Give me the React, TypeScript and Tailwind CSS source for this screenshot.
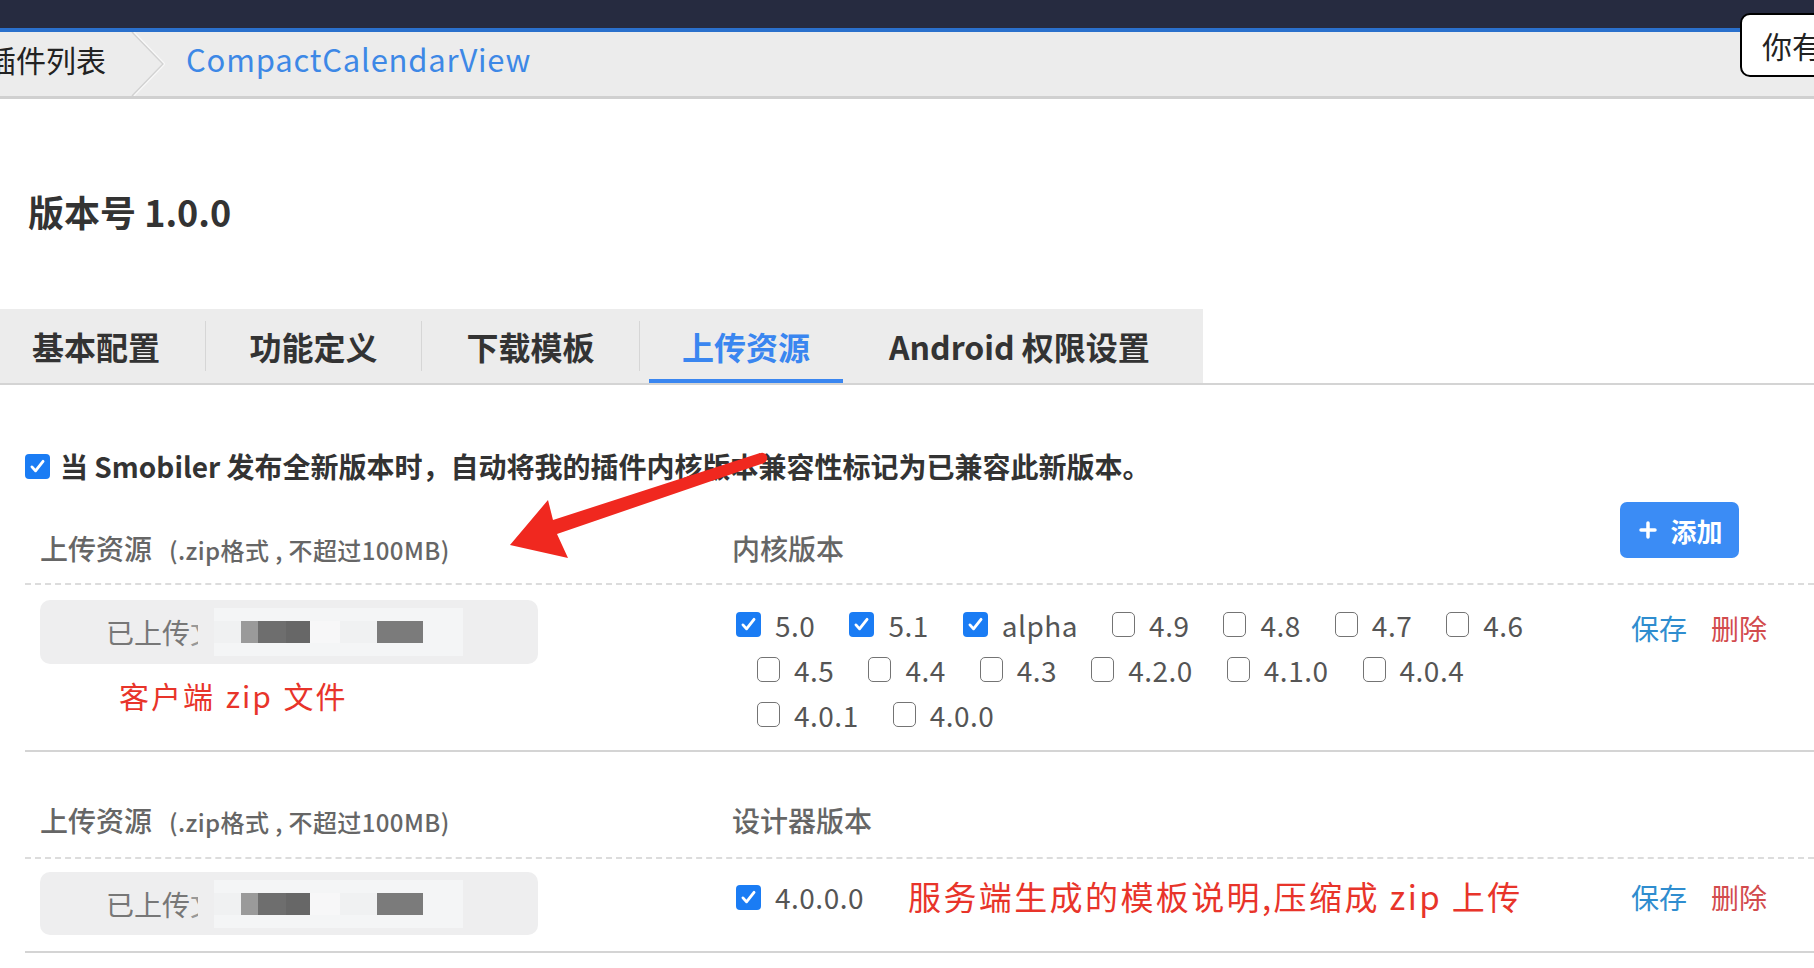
import { Plus } from 'lucide-react';

const row1 = [
  { v: '5.0', c: true },
  { v: '5.1', c: true },
  { v: 'alpha', c: true },
  { v: '4.9' },
  { v: '4.8' },
  { v: '4.7' },
  { v: '4.6' },
];
const row2 = [{ v: '4.5' }, { v: '4.4' }, { v: '4.3' }, { v: '4.2.0' }, { v: '4.1.0' }, { v: '4.0.4' }];
const row3 = [{ v: '4.0.1' }, { v: '4.0.0' }];

function Box({ checked }: { checked?: boolean }) {
  if (checked) {
    return (
      <span className="flex h-[25px] w-[25px] shrink-0 items-center justify-center rounded-[4px] bg-[#1a7cf4]">
        <svg viewBox="0 0 24 24" className="h-[19px] w-[19px]" fill="none" stroke="white" strokeWidth={3.6} strokeLinecap="round" strokeLinejoin="round">
          <path d="M5 12.5l4.5 5L19 5.5" />
        </svg>
      </span>
    );
  }
  return <span className="h-[25px] w-[23px] shrink-0 rounded-[5px] border-[1.5px] border-[#747474] bg-white" />;
}

function Option({ label, checked }: { label: string; checked?: boolean }) {
  return (
    <label className="mr-[34px] flex items-center gap-[14px] text-[28px] tracking-[0.5px] text-[#555]">
      <Box checked={checked} />
      <span>{label}</span>
    </label>
  );
}

function UploadBox({ h }: { h: string }) {
  return (
    <div className={`ml-[15px] flex w-[498px] items-center rounded-[10px] bg-[#eeeeef] pl-[66px] ${h}`}>
      <span className="text-[28px] text-[#777]">已上传</span>
      <span className="w-[8px] overflow-hidden text-[28px] text-[#999]">文</span>
      {/* mosaic blur over the file name */}
      <div className="ml-[16px] flex h-[48px] items-center bg-[#f4f5f6]">
        <div className="h-[22px] w-[27px] bg-[#f0f1f2]" />
        <div className="h-[22px] w-[17px] bg-[#9a9a9a]" />
        <div className="h-[22px] w-[28px] bg-[#6e6e6e]" />
        <div className="h-[22px] w-[24px] bg-[#676767]" />
        <div className="h-[22px] w-[30px] bg-[#f7f7f8]" />
        <div className="h-[22px] w-[37px] bg-[#f0f1f2]" />
        <div className="h-[22px] w-[46px] bg-[#7b7b7b]" />
        <div className="h-[22px] w-[40px] bg-[#f4f5f6]" />
      </div>
    </div>
  );
}

function Actions({ cls }: { cls: string }) {
  return (
    <div className={`flex items-center gap-[24px] text-[28px] ${cls}`}>
      <a className="text-[#2f8dcf]">保存</a>
      <a className="text-[#d24b4d]">删除</a>
    </div>
  );
}

function SectionHead({ title, top, add }: { title: string; top: string; add?: boolean }) {
  return (
    <div className={`flex items-start border-b-2 border-dashed border-[#dcdcdc] ${top}`}>
      <div className="w-[707px] pl-[15px] leading-[36px] text-[#666]">
        <span className="text-[28px] font-medium">上传资源</span>
        <span className="ml-[17px] text-[24px] font-medium tracking-[0.4px]">(.zip格式 , 不超过100MB)</span>
      </div>
      <div className="w-[888px] text-[28px] font-medium leading-[36px] text-[#666]">{title}</div>
      {add && (
        <button className="-mt-[28px] flex h-[56px] w-[119px] items-center justify-center gap-[10px] rounded-[7px] bg-[#3b8cf5] text-[26px] font-bold text-white">
          <Plus size={24} strokeWidth={3.5} />
          添加
        </button>
      )}
    </div>
  );
}

export default function App() {
  return (
    <div className="relative h-screen w-full overflow-hidden bg-white font-['Noto_Sans_CJK_SC','Noto_Sans',sans-serif] text-[#333]">
      <div className="h-[28px] bg-[#262b40]" />
      <div className="h-[4px] bg-[#2a70cc]" />
      <div className="flex h-[67px] items-center border-b-[3px] border-[#d0d0d0] bg-[#ececec]">
        <span className="-ml-[14px] mb-[9px] text-[30px] text-[#222]">插件列表</span>
        <svg className="ml-[25px] h-[64px] w-[34px]" viewBox="0 0 34 64" fill="none">
          <path d="M1 0 L32 32 L1 64" stroke="#d2d2d2" strokeWidth="1.5" />
          <path d="M3 0 L34 32 L3 64" stroke="#f8f8f8" strokeWidth="1.2" />
        </svg>
        <span className="ml-[21px] mb-[9px] text-[31px] tracking-[0.8px] text-[#3d88e6]">CompactCalendarView</span>
      </div>

      <h1 className="mt-[87px] pl-[28px] text-[36px] font-bold leading-[50px] text-[#333]">版本号 1.0.0</h1>

      <div className="mt-[73px] border-b-2 border-[#d4d4d4]">
        <div className="flex h-[74px] w-[1203px] items-center bg-[#ececec] text-[32px] font-bold text-[#333]">
          <div className="w-[205px] pl-[32px]">基本配置</div>
          <div className="h-[50px] w-px bg-[#d6d6d6]" />
          <div className="w-[215px] text-center">功能定义</div>
          <div className="h-[50px] w-px bg-[#d6d6d6]" />
          <div className="w-[217px] text-center">下载模板</div>
          <div className="h-[50px] w-px bg-[#d6d6d6]" />
          <div className="relative flex h-full w-[212px] items-center justify-center text-[#3a86f0]">
            上传资源
            <div className="absolute bottom-0 left-[9px] right-[9px] h-[4px] bg-[#3a86f0]" />
          </div>
          <div className="pl-[37px]">Android 权限设置</div>
        </div>
      </div>

      <div className="pl-[25px]">
        <div className="mt-[61px] flex h-[40px] items-center gap-[10px]">
          <Box checked />
          <span className="text-[28px] font-bold text-[#333]">当 Smobiler 发布全新版本时，自动将我的插件内核版本兼容性标记为已兼容此新版本。</span>
        </div>

        <SectionHead title="内核版本" top="h-[99px] pt-[44px]" add />
        <div className="flex h-[167px] items-start border-b-2 border-[#d4d4d4]">
          <div className="w-[707px] pt-[15px]">
            <UploadBox h="h-[64px]" />
            <div className="mt-[11px] pl-[94px] text-[30px] leading-[40px] tracking-[2px] text-[#e8342a] [word-spacing:2px]">客户端 zip 文件</div>
          </div>
          <div className="w-[899px] pt-[17px] pl-[4px]">
            <div className="flex h-[45px] items-center">
              {row1.map((o) => <Option key={o.v} label={o.v} checked={o.c} />)}
            </div>
            <div className="flex h-[45px] items-center pl-[21px]">
              {row2.map((o) => <Option key={o.v} label={o.v} />)}
            </div>
            <div className="flex h-[45px] items-center pl-[21px]">
              {row3.map((o) => <Option key={o.v} label={o.v} />)}
            </div>
          </div>
          <Actions cls="mt-[20px] h-[45px]" />
        </div>

        <SectionHead title="设计器版本" top="h-[107px] pt-[50px]" />
        <div className="flex h-[94px] items-start border-b-2 border-[#d4d4d4]">
          <div className="w-[707px] pt-[13px]">
            <UploadBox h="h-[63px]" />
          </div>
          <div className="mt-[13px] flex h-[50px] w-[899px] items-center pl-[4px]">
            <Option label="4.0.0.0" checked />
            <span className="ml-[10px] whitespace-nowrap text-[33px] tracking-[2.4px] text-[#e8342a]">服务端生成的模板说明,压缩成 zip 上传</span>
          </div>
          <Actions cls="mt-[13px] h-[50px]" />
        </div>
      </div>

      {/* annotation arrow drawn over the page */}
      <svg className="pointer-events-none absolute left-[500px] top-[440px] h-[130px] w-[280px]" viewBox="0 0 280 130">
        <polygon points="10,105 48,60 53,80 260,13 264,23 57,94 68,118" fill="#f0281f" />
        <circle cx="262" cy="18" r="5.3" fill="#f0281f" />
      </svg>

      {/* popup cut off at the right edge */}
      <div className="absolute left-[1740px] top-[13px] flex h-[64px] w-[120px] items-center rounded-[10px] border-2 border-black bg-white pl-[20px] text-[30px] text-[#222]">
        你有
      </div>
    </div>
  );
}
